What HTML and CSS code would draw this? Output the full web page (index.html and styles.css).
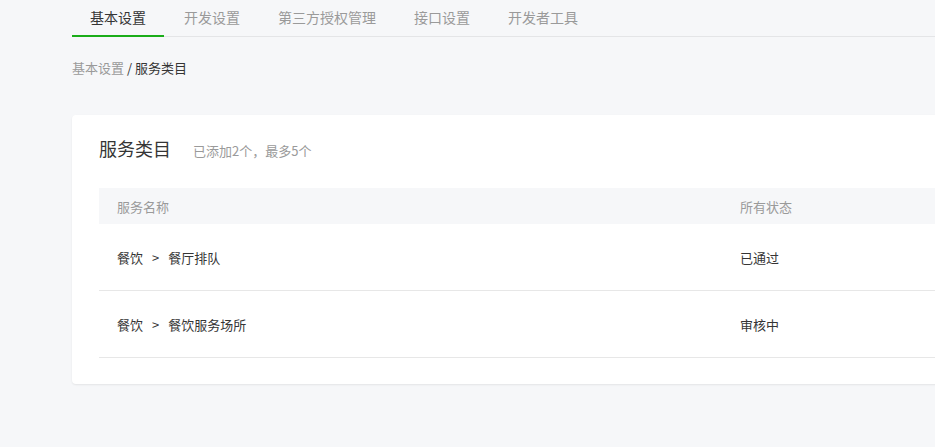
FILE: index.html
```html
<!DOCTYPE html>
<html lang="zh">
<head>
<meta charset="utf-8">
<link rel="stylesheet" href="styles.css">
</head>
<body>
<div class="page">
  <nav class="tabs">
    <a class="tab active">基本设置</a>
    <a class="tab">开发设置</a>
    <a class="tab">第三方授权管理</a>
    <a class="tab">接口设置</a>
    <a class="tab">开发者工具</a>
  </nav>
  <div class="crumbs"><span class="crumb-link">基本设置</span> / <span class="crumb-cur">服务类目</span></div>
  <section class="card">
    <div class="card-head">
      <h2 class="card-title">服务类目</h2>
      <span class="card-sub">已添加2个，最多5个</span>
    </div>
    <div class="table">
      <div class="row head">
        <div class="c1">服务名称</div>
        <div class="c2">所有状态</div>
      </div>
      <div class="row">
        <div class="c1">餐饮<span class="gt">&gt;</span>餐厅排队</div>
        <div class="c2">已通过</div>
      </div>
      <div class="row">
        <div class="c1">餐饮<span class="gt">&gt;</span>餐饮服务场所</div>
        <div class="c2">审核中</div>
      </div>
    </div>
  </section>
</div>
</body>
</html>
```

FILE: styles.css
```css
html, body {
  margin: 0;
  padding: 0;
  overflow: hidden;
  background: #f6f7f9;
}
body {
  font-family: "Noto Sans CJK SC", "Noto Sans", sans-serif;
  color: #353535;
  width: 935px;
  height: 447px;
}
.page {
  width: 1100px;
  padding-left: 72px;
}
.tabs {
  display: flex;
  gap: 2px;
  height: 36px;
  border-bottom: 1px solid #e4e5e7;
}
.tab {
  display: block;
  padding: 0 18px 1px;
  font-size: 14px;
  line-height: 34px;
  color: #9a9a9a;
  border-bottom: 2px solid transparent;
  margin-bottom: -1px;
}
.tab.active {
  color: #353535;
  border-bottom-color: #1aad19;
}
.crumbs {
  font-size: 13px;
  line-height: 20px;
  margin-top: 21px;
  color: #353535;
}
.crumb-link { color: #9a9a9a; }
.card {
  margin-top: 37px;
  background: #fff;
  border-radius: 4px;
  box-shadow: 0 1px 2px rgba(0,0,0,0.08);
  padding: 20px 0 26px 27px;
}
.card-head {
  display: flex;
  align-items: baseline;
  gap: 22px;
  height: 26px;
}
.card-title {
  margin: 0;
  font-size: 18px;
  font-weight: normal;
  line-height: 26px;
  color: #353535;
}
.card-sub {
  font-size: 13px;
  color: #9a9a9a;
}
.table {
  margin-top: 27px;
}
.row {
  display: flex;
  height: 66px;
  align-items: center;
  border-bottom: 1px solid #e7e7e7;
  font-size: 13px;
  color: #353535;
}
.row.head {
  height: 36px;
  background: #f6f7f9;
  border-bottom: none;
  color: #9a9a9a;
}
.c1 {
  width: 605px;
  padding-left: 18px;
}
.c2 {
  padding-left: 18px;
}
.gt {
  margin: 0 9px;
}
```
